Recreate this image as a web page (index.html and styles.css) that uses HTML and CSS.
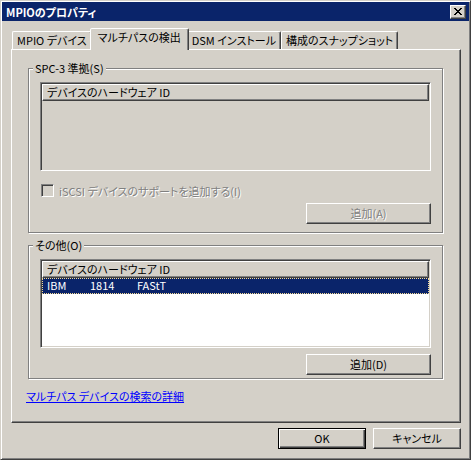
FILE: index.html
```html
<!DOCTYPE html>
<html>
<head>
  <meta charset="utf-8">
  <title>MPIOのプロパティ</title>
  <link rel="stylesheet" href="styles.css">
</head>
<body>
  <div class="window">
    <div class="titlebar">
      <span class="title">MPIOのプロパティ</span>
      <span class="close-btn">
        <svg width="8" height="7" viewBox="0 0 8 7" shape-rendering="crispEdges">
          <path fill="#000" d="M0 0h2v1H0z M6 0h2v1H6z M1 1h2v1H1z M5 1h2v1H5z M2 2h4v1H2z M3 3h2v1H3z M2 4h4v1H2z M1 5h2v1H1z M5 5h2v1H5z M0 6h2v1H0z M6 6h2v1H6z"/>
        </svg>
      </span>
    </div>

    <div class="dialog">
      <div class="tabs">
        <div class="tab">MPIO デバイス</div>
        <div class="tab active">マルチパスの検出</div>
        <div class="tab">DSM インストール</div>
        <div class="tab">構成のスナップショット</div>
      </div>

      <div class="panel">
        <fieldset class="group">
          <legend>SPC-3 準拠(S)</legend>
          <div class="listview disabled">
            <div class="list-header">デバイスのハードウェア ID</div>
          </div>
          <label class="check disabled">
            <span class="checkbox"></span>
            <span>iSCSI デバイスのサポートを追加する(I)</span>
          </label>
          <div class="btn-row">
            <button class="btn btn-wide" disabled>追加(A)</button>
          </div>
        </fieldset>

        <fieldset class="group group-other">
          <legend>その他(O)</legend>
          <div class="listview">
            <div class="list-header">デバイスのハードウェア ID</div>
            <div class="list-row selected">
              <span class="col-vendor">IBM</span><span class="col-product">1814</span><span>FAStT</span>
            </div>
          </div>
          <div class="btn-row">
            <button class="btn btn-wide">追加(D)</button>
          </div>
        </fieldset>

        <a class="more-link" href="#">マルチパス デバイスの検索の詳細</a>
      </div>

      <div class="footer">
        <button class="btn default">OK</button>
        <button class="btn">キャンセル</button>
      </div>
    </div>
  </div>
</body>
</html>
```

FILE: styles.css
```css
* {
  box-sizing: border-box;
}
body {
  margin: 0;
  background-color: #d4d0c8;
  font-family: "Noto Sans CJK JP", sans-serif;
  font-size: 11px;
  font-feature-settings: "palt";
  line-height: 14px;
  color: #000;
}

/* window frame */
.window {
  width: 471px;
  height: 460px;
  padding: 1px;
  border: 1px solid;
  border-color: #d4d0c8 #404040 #404040 #d4d0c8;
  box-shadow: inset 1px 1px #fff, inset -1px -1px #808080;
}
.titlebar {
  height: 19px;
  display: flex;
  align-items: center;
  justify-content: space-between;
  padding: 0 3px 0 4px;
  background-color: #0a246a;
  color: white;
  font-weight: bold;
}
.close-btn {
  width: 16px;
  height: 14px;
  display: flex;
  align-items: center;
  justify-content: center;
  border: 1px solid;
  border-color: #fff #404040 #404040 #fff;
  box-shadow: inset -1px -1px #808080;
  background-color: #d4d0c8;
}

.dialog {
  padding: 7px 8px 0 9px;
}

/* tabs */
.tabs {
  display: flex;
  align-items: flex-end;
  height: 21px;
  padding-left: 1px;
}
.tab {
  height: 18px;
  padding: 1px 4px 0;
  border: 1px solid;
  border-bottom: none;
  border-color: #fff #404040 transparent #fff;
  border-radius: 2px 2px 0 0;
  box-shadow: inset -1px 0 #808080;
  white-space: nowrap;
  line-height: 15px;
}
.tab.active {
  position: relative;
  z-index: 1;
  height: 22px;
  margin: 0 -2px -1px;
  padding: 1px 7px 0;
  background-color: #d4d0c8;
}
.panel {
  height: 374px;
  display: flex;
  flex-direction: column;
  padding: 11px 17px 0 16px;
  border: 1px solid;
  border-color: #fff #404040 #404040 #fff;
  box-shadow: inset -1px -1px #808080;
}

/* group boxes */
.group {
  margin: 0;
  min-width: 0;
  padding: 7px 11px 8px;
  border: 1px solid #808080;
  box-shadow: inset 1px 1px #fff, 1px 1px #fff;
}
.group legend {
  margin-left: -7px;
  padding: 0 2px;
  line-height: 14px;
  background-color: #d4d0c8;
}
.group-other {
  margin-top: 5px;
  padding-bottom: 3px;
}

/* list views */
.listview {
  height: 89px;
  padding: 1px;
  border: 1px solid;
  border-color: #808080 #fff #fff #808080;
  box-shadow: inset 1px 1px #404040, inset -1px -1px #d4d0c8;
  background-color: #fff;
}
.listview.disabled {
  background-color: #d4d0c8;
}
.list-header {
  height: 17px;
  padding-left: 4px;
  border: 1px solid;
  border-color: #fff #404040 #404040 #fff;
  box-shadow: inset -1px -1px #808080;
  background-color: #d4d0c8;
  line-height: 15px;
  white-space: nowrap;
}
.list-row {
  height: 16px;
  padding-left: 5px;
  line-height: 15px;
  white-space: nowrap;
}
.list-row.selected {
  background-color: #0a246a;
  color: white;
  outline: 1px dotted #f5db95;
  outline-offset: -1px;
}
.col-vendor {
  display: inline-block;
  width: 43px;
}
.col-product {
  display: inline-block;
  width: 47px;
}

/* checkbox */
.check {
  display: flex;
  align-items: center;
  gap: 5px;
  margin-top: 13px;
  padding-left: 1px;
  height: 13px;
}
.checkbox {
  width: 13px;
  height: 13px;
  border: 1px solid;
  border-color: #808080 #fff #fff #808080;
  box-shadow: inset 1px 1px #404040, inset -1px -1px #d4d0c8;
  background-color: #d4d0c8;
}
.check.disabled {
  color: #808080;
  text-shadow: 1px 1px #fff;
}

/* buttons */
.btn-row {
  display: flex;
  justify-content: flex-end;
  margin-top: 6px;
}
.btn {
  width: 88px;
  height: 21px;
  padding: 0;
  font: inherit;
  line-height: 17px;
  color: #000;
  background-color: #d4d0c8;
  border: 1px solid;
  border-color: #fff #404040 #404040 #fff;
  border-radius: 0;
  box-shadow: inset -1px -1px #808080;
}
.btn-wide {
  width: 125px;
}
.btn:disabled {
  color: #808080;
  text-shadow: 1px 1px #fff;
}
.btn.default {
  border-color: #000;
  box-shadow: inset 1px 1px #fff, inset -1px -1px #404040, inset -2px -2px #808080;
}

.more-link {
  align-self: flex-start;
  margin: 10px 0 0 -2px;
  color: #0000ff;
}

.footer {
  display: flex;
  justify-content: flex-end;
  gap: 7px;
  margin-top: 5px;
}
```
